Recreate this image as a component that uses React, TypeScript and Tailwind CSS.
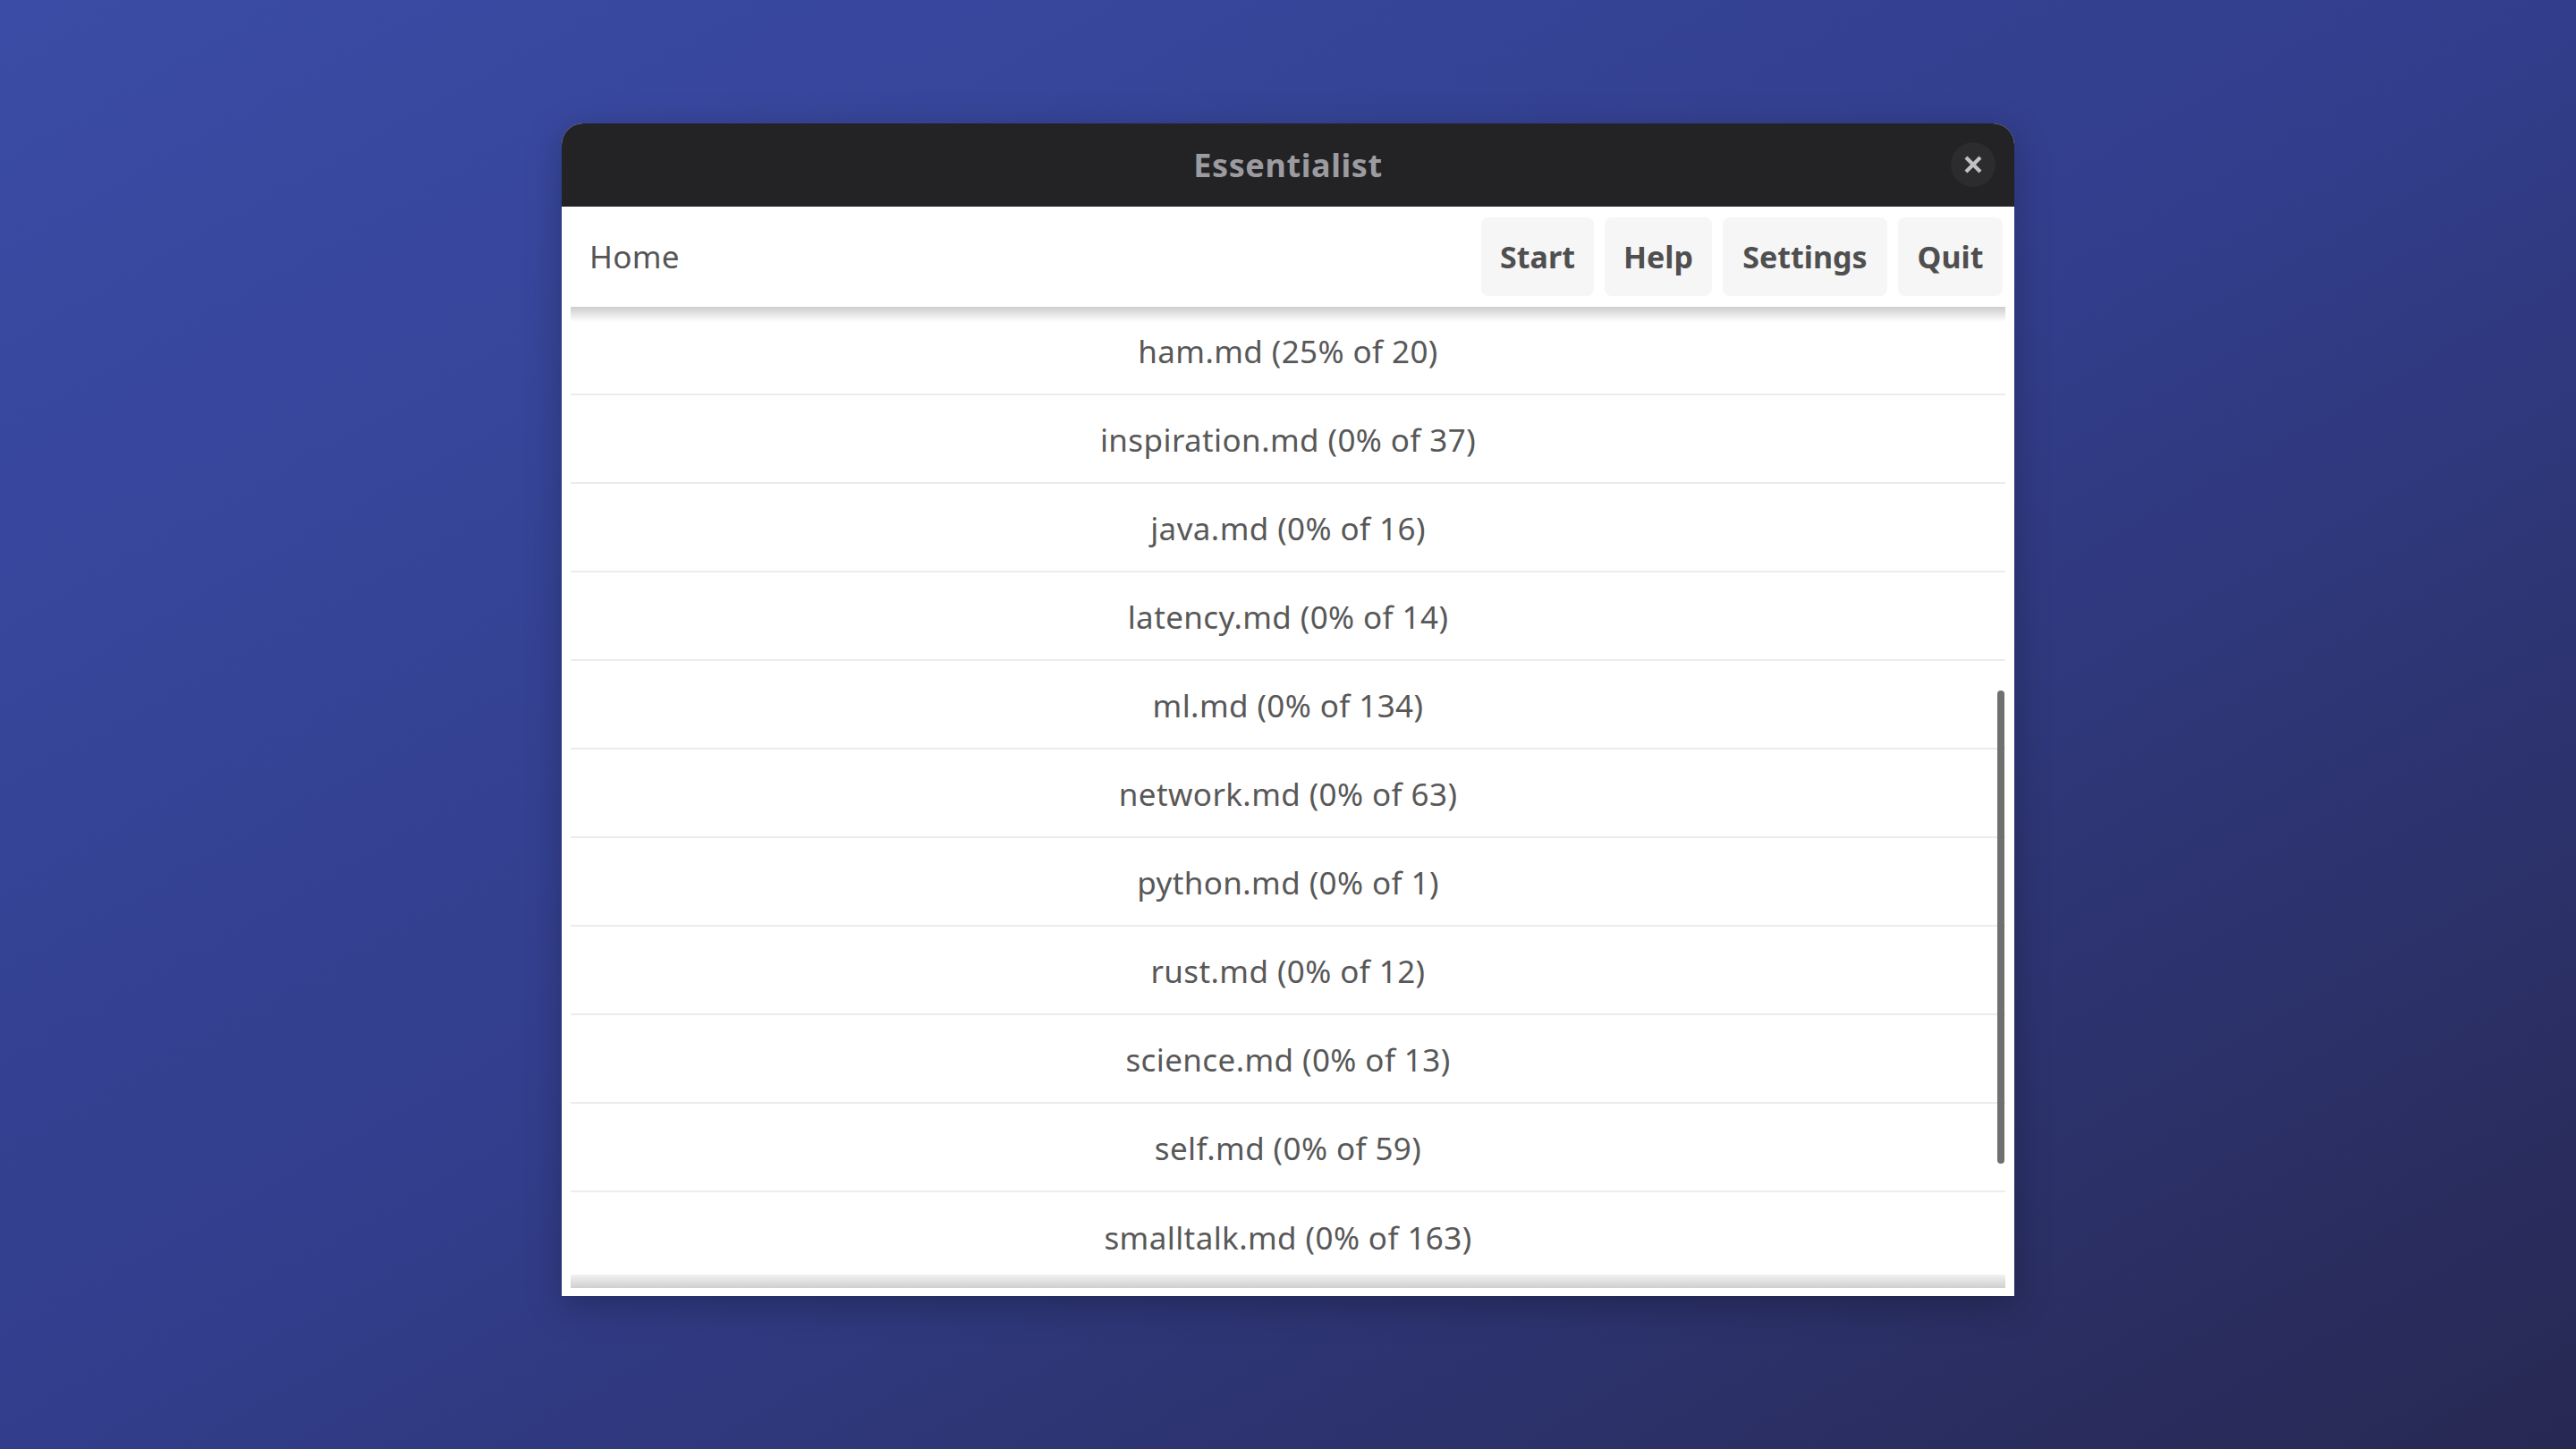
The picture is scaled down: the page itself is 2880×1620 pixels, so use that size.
const FILES = [
  { name: "ham.md", pct: 25, total: 20 },
  { name: "inspiration.md", pct: 0, total: 37 },
  { name: "java.md", pct: 0, total: 16 },
  { name: "latency.md", pct: 0, total: 14 },
  { name: "ml.md", pct: 0, total: 134 },
  { name: "network.md", pct: 0, total: 63 },
  { name: "python.md", pct: 0, total: 1 },
  { name: "rust.md", pct: 0, total: 12 },
  { name: "science.md", pct: 0, total: 13 },
  { name: "self.md", pct: 0, total: 59 },
  { name: "smalltalk.md", pct: 0, total: 163 },
];

const MENU = [
  { label: "Start", w: "w-[126px]" },
  { label: "Help", w: "w-[120px]" },
  { label: "Settings", w: "w-[184px]" },
  { label: "Quit", w: "w-[117px]" },
];

export default function App() {
  return (
    <div
      className="w-full h-[1620px] flex justify-center pt-[138px] bg-gradient-to-br from-[#3b4ca6] via-[#323e8c] to-[#272852]"
      style={{ fontFamily: '"Noto Sans", "Open Sans", sans-serif' }}
    >
      {/* Window */}
      <div className="w-[1624px] h-[1311px] flex flex-col bg-white rounded-t-[24px] shadow-[0_10px_40px_rgba(0,0,0,0.25)]">
        {/* Title bar */}
        <div className="relative h-[93px] shrink-0 bg-[#232326] rounded-t-[24px] flex items-center justify-center">
          <span className="text-[36px] font-bold text-[#9c9ca0] tracking-[0.6px]">Essentialist</span>
          <button className="absolute right-[21px] top-[21px] w-[50px] h-[50px] rounded-full bg-[#2c2c2f] flex items-center justify-center">
            <svg width="22" height="22" viewBox="0 0 22 22">
              <path d="M3 3 L19 19 M19 3 L3 19" stroke="#c2c2c4" strokeWidth="4.2" strokeLinecap="butt" />
            </svg>
          </button>
        </div>

        {/* Header */}
        <div className="h-[112px] shrink-0 flex items-center pl-[31px] pr-[13px]">
          <span className="text-[35px] text-[#555555] tracking-[0.3px]">Home</span>
          <div className="ml-auto flex gap-[12px]">
            {MENU.map(m => (
              <button
                key={m.label}
                className={`${m.w} h-[88px] rounded-[8px] bg-[#f6f6f6] text-[34px] font-bold text-[#4f4f4f] flex items-center justify-center`}
              >
                {m.label}
              </button>
            ))}
          </div>
        </div>

        {/* List */}
        <div className="px-[10px] pb-[9px] flex-1 min-h-0">
          <div className="relative h-full overflow-hidden">
            {FILES.map((f, i) => (
              <div
                key={f.name}
                className={`h-[99px] pt-[4px] flex items-center justify-center text-[35px] tracking-[0.4px] text-[#585858] ${
                  i < FILES.length - 1 ? "border-b-2 border-[#ececec]" : ""
                }`}
              >
                {f.name} ({f.pct}% of {f.total})
              </div>
            ))}

            {/* top shadow */}
            <div className="absolute left-0 right-0 top-0 h-[17px] bg-gradient-to-b from-[#cdcdcd] via-[#e6e6e6] to-transparent" />
            {/* bottom band */}
            <div className="absolute left-0 right-0 bottom-0 h-[15px] bg-gradient-to-b from-[#f2f2f2] to-[#cfcfcf]" />
            {/* scrollbar */}
            <div className="absolute right-[1px] top-[429px] w-[8px] h-[529px] rounded-full bg-[#707070]" />
          </div>
        </div>
      </div>
    </div>
  );
}
